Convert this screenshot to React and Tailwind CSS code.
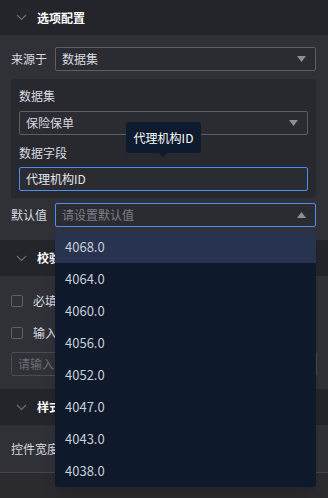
import React from 'react';

const font = { fontFamily: '"Noto Sans CJK SC", "Noto Sans", sans-serif' };

const Chevron = () => (
  <svg width="11" height="7" viewBox="0 0 11 7" className="text-[#6b6e78]">
    <path d="M1 1l4.5 4.5L10 1" fill="none" stroke="currentColor" strokeWidth="1.1" />
  </svg>
);

const Caret = ({ up }) => (
  <svg width="9" height="6" viewBox="0 0 9 6" className="text-[#8b8e98]">
    <path d={up ? 'M0 6h9L4.5 0z' : 'M0 0h9L4.5 6z'} fill="currentColor" />
  </svg>
);

const SectionHeader = ({ title, height }) => (
  <div className={`flex items-center bg-[#23252b] pl-[16px] ${height}`}>
    <Chevron />
    <span className="ml-[10px] text-[12px] font-bold text-white">{title}</span>
  </div>
);

const Select = ({ value, placeholder, active, up }) => (
  <div
    className={`flex h-[24px] flex-1 items-center justify-between rounded-[2px] border bg-[#2b2c31] pl-[6px] pr-[9px] ${
      active ? 'border-[#4b8ef7]' : 'border-[#5c5e66]'
    }`}
  >
    <span className={`text-[12px] ${value ? 'text-[#d8dae0]' : 'text-[#7c7f88]'}`}>{value || placeholder}</span>
    <Caret up={up} />
  </div>
);

const Checkbox = ({ label }) => (
  <div className="flex h-[20px] items-center">
    <span className="h-[12px] w-[12px] rounded-[2px] border border-[#5f6169]" />
    <span className="ml-[10px] text-[12px] text-[#d8dae0]">{label}</span>
  </div>
);

const options = ['4068.0', '4064.0', '4060.0', '4056.0', '4052.0', '4047.0', '4043.0', '4038.0'];

export default function App() {
  return (
    <div style={font} className="relative h-[498px] w-[328px] overflow-hidden bg-[#2a2a2f]">
      <SectionHeader title="选项配置" height="h-[35px]" />
      <div className="bg-[#303136] px-[11px] pt-[12px] pb-[13px] pr-[12px]">
        <div className="flex items-center">
          <span className="w-[44px] text-[12px] text-[#d8dae0]">来源于</span>
          <Select value="数据集" />
        </div>

        <div className="relative mt-[8px] rounded-[3px] bg-[#28292e] px-[8px] pt-[7px] pb-[7px]">
          <div className="flex h-[20px] items-center text-[12px] text-[#d8dae0]">数据集</div>
          <div className="mt-[5px] flex">
            <Select value="保险保单" />
          </div>
          <div className="mt-[8px] flex h-[20px] items-center text-[12px] text-[#d8dae0]">数据字段</div>
          <div className="mt-[4px] flex h-[24px] items-center rounded-[2px] border border-[#4b8ef7] bg-[#2b2c31] pl-[6px]">
            <span className="text-[12px] text-[#e4e6eb]">代理机构ID</span>
          </div>

          {/* tooltip */}
          <div className="absolute left-[115px] top-[43px] flex h-[31px] w-[75px] items-center justify-center rounded-[3px] bg-[#0e1a2d]">
            <span className="text-[12px] text-white">代理机构ID</span>
            <span className="absolute bottom-[-4px] left-[33px] h-0 w-0 border-x-[4px] border-t-[4px] border-x-transparent border-t-[#0e1a2d]" />
          </div>
        </div>

        <div className="mt-[5px] flex items-center">
          <span className="w-[44px] text-[12px] text-[#d8dae0]">默认值</span>
          <Select placeholder="请设置默认值" active up />
        </div>
      </div>

      <SectionHeader title="校验规则" height="h-[36px]" />
      <div className="bg-[#303136] px-[11px] pt-[15px] pb-[13px]">
        <Checkbox label="必填" />
        <div className="mt-[12px]">
          <Checkbox label="输入长度限制" />
        </div>
        <div className="mt-[9px] flex h-[24px] items-center rounded-[2px] border border-[#4a4c53] pl-[6px]">
          <span className="text-[12px] text-[#6c6f77]">请输入</span>
        </div>
      </div>

      <SectionHeader title="样式设置" height="h-[36px]" />
      <div className="flex h-[48px] items-center border-b border-[#45464c] bg-[#303136] px-[11px]">
        <span className="text-[12px] text-[#d8dae0]">控件宽度</span>
      </div>

      {/* dropdown */}
      <div className="absolute left-[55px] top-[231px] w-[261px] overflow-hidden rounded-b-[3px] bg-[#0e192c] shadow-lg">
        {options.map((o, i) => (
          <div
            key={o}
            className={`flex h-[32px] items-center pl-[10px] text-[13px] text-[#c9ced8] ${i === 0 ? 'bg-[#283350]' : ''}`}
          >
            {o}
          </div>
        ))}
      </div>
    </div>
  );
}
